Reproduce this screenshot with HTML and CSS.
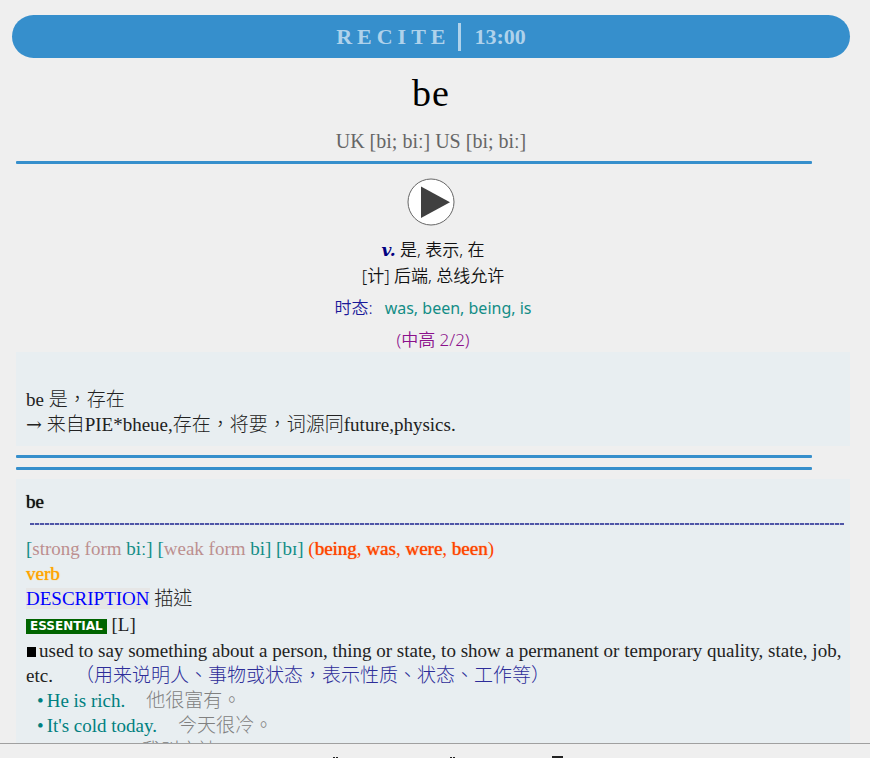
FILE: index.html
```html
<!DOCTYPE html>
<html lang="zh-CN">
<head>
<meta charset="utf-8">
<title>Recite</title>
<link rel="stylesheet" href="styles.css">
</head>
<body>
<main class="viewer">
  <div class="lead">
    <header class="banner"><span class="spaced">RECITE</span><span class="bar"></span><span>13:00</span></header>
    <h1 class="word">be</h1>
    <p class="phonetic">UK [bi; biː] US [bi; biː]</p>
  </div>
  <hr class="rule">
  <div class="lead">
    <button class="play" type="button" aria-label="Play pronunciation">
      <svg viewBox="0 0 48 48" width="48" height="48"><circle cx="24" cy="24" r="23" fill="#fff" stroke="#666" stroke-width="1"/><path d="M14 8.500V40L43 24.300Z" fill="#404040"/></svg>
    </button>
  </div>
  <section class="summary">
    <p><b class="pos">v.</b> 是, 表示, 在</p>
    <p>[计] 后端, 总线允许</p>
    <p class="tense"><span class="label">时态:</span>was, been, being, is</p>
    <p class="level">(中高 2/2)</p>
  </section>
  <section class="panel etymology" lang="zh-TW">
    <p>be 是，存在</p>
    <p><span class="arrow">→</span> 来自PIE*bheue,存在，将要，词源同future,physics.</p>
  </section>
  <hr class="rule">
  <hr class="rule">
  <article class="panel entry" lang="zh-TW">
    <h2 class="headword">be</h2>
    <div class="dashes"></div>
    <p class="forms">[<span class="rosy">strong form</span> biː] [<span class="rosy">weak form</span> bi] [bɪ] <span class="inflect">(<b>being</b>, <b>was</b>, <b>were</b>, <b>been</b>)</span></p>
    <p class="verb">verb</p>
    <p><span class="topic">DESCRIPTION</span> 描述</p>
    <p class="tags"><span class="essential">ESSENTIAL</span> [L]</p>
    <p class="definition"><span class="square"></span>used to say something about a person, thing or state, to show a permanent or temporary quality, state, job, etc.<span class="gloss">（用来说明人、事物或状态，表示性质、状态、工作等）</span></p>
    <ul class="examples">
      <li>He is rich.<span class="translation">他很富有。</span></li>
      <li>It's cold today.<span class="translation">今天很冷。</span></li>
      <li>I'm Andy.<span class="translation">我叫安迪。</span></li>
    </ul>
  </article>
</main>
<footer class="toolbar">
  <svg viewBox="0 0 232 2" width="232" height="2" aria-hidden="true">
    <path d="M2 1h2v1H2zM5 1h2v1H5zM119 1h2v1h-2zM122 1h2v1h-2zM221 0h11v2h-11z" fill="#222"/>
  </svg>
</footer>
</body>
</html>
```
FILE: styles.css
```css
* { box-sizing: border-box; }
html, body { height: 100%; }
body {
  margin: 0;
  display: flex;
  flex-direction: column;
  overflow: hidden;
  background: #efefef;
  color: #222;
  font-family: "Liberation Serif", "Noto Sans CJK TC", serif;
  font-size: 19px;
  line-height: 25px;
}
p, h1, h2, ul { margin: 0; padding: 0; }
.viewer {
  flex: 1;
  min-height: 0;
  overflow: hidden;
  padding: 15px 20px 0 16px;
}
.lead { margin-left: -4px; }
.banner {
  display: flex;
  align-items: center;
  justify-content: center;
  height: 43px;
  border-radius: 22px;
  background: #368fcc;
  color: #afd2eb;
  font-size: 22px;
  font-weight: bold;
}
.spaced { letter-spacing: 5px; }
.bar { width: 3px; height: 28px; margin: 0 14px 0 7px; background: #afd2eb; }
.word {
  padding-top: 12px;
  color: #000;
  font-size: 38px;
  font-weight: normal;
  line-height: 46px;
  letter-spacing: 1px;
  text-align: center;
}
.phonetic {
  padding: 13px 0 7px;
  color: #666;
  font-size: 20px;
  line-height: 25px;
  text-align: center;
}
.rule {
  height: 3px;
  margin: 0 38px 9px 0;
  border: 0;
  border-radius: 1px;
  background: #368fcc;
}
.play {
  display: block;
  width: 48px;
  height: 48px;
  margin: 14px auto 11px;
  padding: 0;
  border: 0;
  background: none;
}
.play svg { display: block; }
.summary {
  color: #111;
  font-family: "Noto Sans", "Noto Sans CJK SC", sans-serif;
  font-size: 17px;
  font-weight: 350;
  line-height: 26px;
  text-align: center;
}
.pos { color: #000080; font-family: "DejaVu Serif", serif; font-style: italic; font-weight: bold; }
.tense { padding-top: 6px; color: #138d86; font-size: 16px; font-weight: 400; }
.label { margin-right: 12px; color: #1a1a99; font-size: 17px; font-weight: 350; }
.level { padding-top: 7px; color: #8b108b; line-height: 24px; }
.panel { padding: 0 6px 0 10px; background: #e8eef1; font-weight: 300; }
.etymology { margin-bottom: 9px; padding-top: 35px; padding-bottom: 9px; }
.arrow { font-family: "DejaVu Serif", serif; line-height: 1; }
.headword { padding-top: 10px; color: #111; font-size: 19px; }
.headword, .verb, .inflect b { font-weight: 400; text-shadow: 0 0 1px currentColor; }
.dashes {
  height: 2px;
  margin: 9px 0 11px 4px;
  background: repeating-linear-gradient(90deg, #4f55a8 0 4px, #c4c9e0 4px 5px);
}
.forms { color: #138d86; }
.rosy { color: #bc8f8f; }
.inflect { color: #ff4500; }
.verb { color: #ffa500; }
.topic { background: #e6e6e6; color: #0000ff; }
.tags { line-height: 27px; }
.essential {
  display: inline-block;
  padding: 0 4px;
  background: #006400;
  color: #fff;
  font-family: "DejaVu Sans", sans-serif;
  font-size: 12px;
  font-weight: bold;
  line-height: 15px;
  vertical-align: 1px;
}
.square { display: inline-block; width: 9px; height: 10px; margin: 0 3px 0 1px; background: #000; }
.gloss { margin-left: 22px; color: #2d2d99; }
.examples { list-style: none; color: #008080; }
.examples li { padding-left: 11px; }
.examples li::before { content: "•"; margin-right: 3px; }
.translation { margin-left: 21px; color: #808080; }
.toolbar {
  flex: none;
  display: flex;
  align-items: flex-end;
  justify-content: center;
  height: 15px;
  padding-left: 24px;
  border-top: 1px solid #a0a0a0;
}
```
